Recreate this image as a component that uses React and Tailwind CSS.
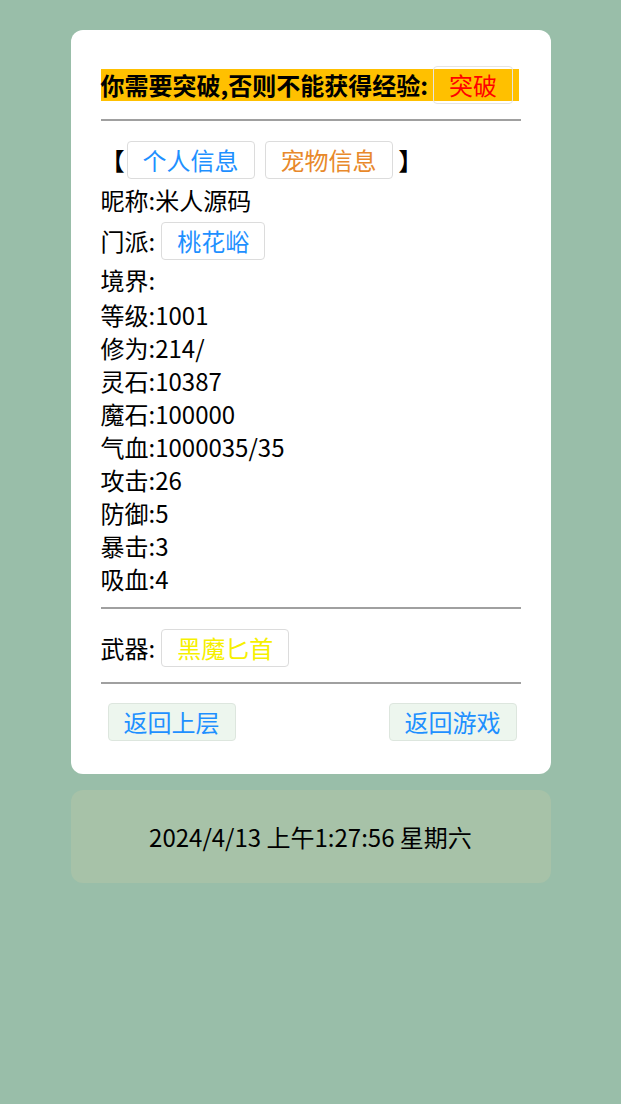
export default function App() {
  const stats = [
    ['等级', '1001'],
    ['修为', '214/'],
    ['灵石', '10387'],
    ['魔石', '100000'],
    ['气血', '1000035/35'],
    ['攻击', '26'],
    ['防御', '5'],
    ['暴击', '3'],
    ['吸血', '4'],
  ]

  const btn = 'inline-flex items-center h-[38px] px-[15px] border rounded-[4px]'
  const white = btn + ' bg-white border-[#dcdcdc]'
  const green = btn + ' bg-[#edf6ee] border-[#dde6de] text-[#1e90ff]'

  return (
    <div
      className="min-h-[1104px] bg-[#99bea9] pt-[30px] text-[24px] text-black"
      style={{ fontFamily: '"Microsoft YaHei", "Noto Sans CJK SC", "Noto Sans", sans-serif' }}
    >
      <div className="mx-auto w-[480px] bg-white rounded-[12px] px-[30px] pt-[36px] pb-[33px]">
        {/* header */}
        <div className="flex items-center h-[38px]">
          <div className="flex items-center h-[32px] bg-[#ffc000] w-[418px]">
            <span className="font-bold leading-[32px] whitespace-nowrap">你需要突破,否则不能获得经验:</span>
            <span className="ml-[5px] inline-flex items-center h-[38px] px-[15px] border border-[#e4e4e4] rounded-[4px] text-[#ff0000]">突破</span>
          </div>
        </div>
        <div className="mt-[15px] h-[2px] bg-[#a0a0a0]"></div>

        <div className="mt-[19px] flex items-center h-[40px] gap-[10px]">
          <span className="font-bold -mr-[8px]">【</span>
          <span className={white + ' text-[#1e90ff]'}>个人信息</span>
          <span className={white + ' text-[#e8892b]'}>宠物信息</span>
          <span className="font-bold -ml-[4px]">】</span>
        </div>
        <div className="flex items-center h-[40px]">昵称:米人源码</div>
        <div className="flex items-center h-[42px]">
          门派:<span className={white + ' ml-[6px] text-[#1e90ff]'}>桃花峪</span>
        </div>
        <div className="flex items-center h-[36px]">境界:</div>
        {stats.map(([k, v]) => (
          <div key={k} className="flex items-center h-[33px]">
            {k}:{v}
          </div>
        ))}
        <div className="mt-[12px] h-[2px] bg-[#a0a0a0]"></div>

        <div className="mt-[20px] flex items-center h-[38px]">
          武器:<span className={white + ' ml-[6px] text-[#f6f000]'}>黑魔匕首</span>
        </div>
        <div className="mt-[15px] h-[2px] bg-[#a0a0a0]"></div>

        <div className="mt-[19px] flex justify-between pl-[7px] pr-[4px]">
          <span className={green}>返回上层</span>
          <span className={green}>返回游戏</span>
        </div>
      </div>

      <div className="mx-auto mt-[16px] w-[480px] h-[93px] bg-[#a7c2a8] rounded-[12px] flex items-center justify-center">
        2024/4/13 上午1:27:56 星期六
      </div>
    </div>
  )
}
